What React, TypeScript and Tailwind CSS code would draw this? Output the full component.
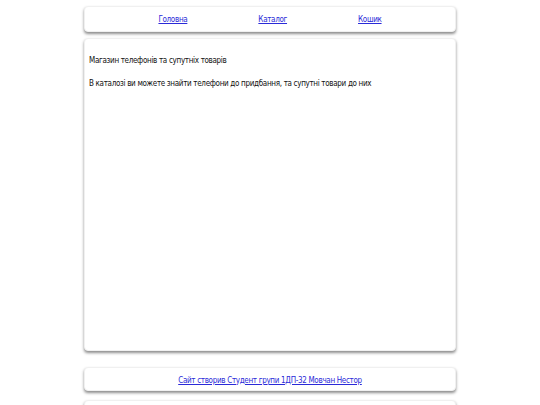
export default function App() {
  const card = 'w-[372px] mx-auto bg-white rounded-[4px] border border-[#f0f0f0] shadow-[0_2px_3px_rgba(0,0,0,0.45)]'
  return (
    <div className="min-h-[405px] bg-white pt-[6px] text-[8px] tracking-[-0.32px] text-[#111]" style={{ fontFamily: '"DejaVu Sans Condensed", "DejaVu Sans", sans-serif' }}>
      <nav className={`${card} h-[26px] flex items-center justify-center gap-[71px] pt-[1px]`}>
        <a href="#" className="text-[#2a2ad8] underline">Головна</a>
        <a href="#" className="text-[#2a2ad8] underline">Каталог</a>
        <a href="#" className="text-[#2a2ad8] underline">Кошик</a>
      </nav>
      <main className={`${card} mt-[6px] h-[313px] px-[4px] pt-[17px]`}>
        <p className="leading-[10px]">Магазин телефонів та супутніх товарів</p>
        <p className="leading-[10px] mt-[13px]">В каталозі ви можете знайти телефони до придбання, та супутні товари до них</p>
      </main>
      <footer className={`${card} mt-[16px] h-[24px] flex items-center justify-center pt-[3px]`}>
        <a href="#" className="text-[#2a2ad8] underline">Сайт створив Студент групи 1ДП-32 Мовчан Нестор</a>
      </footer>
      <div className={`${card} mt-[9px] h-[24px]`} />
    </div>
  )
}
